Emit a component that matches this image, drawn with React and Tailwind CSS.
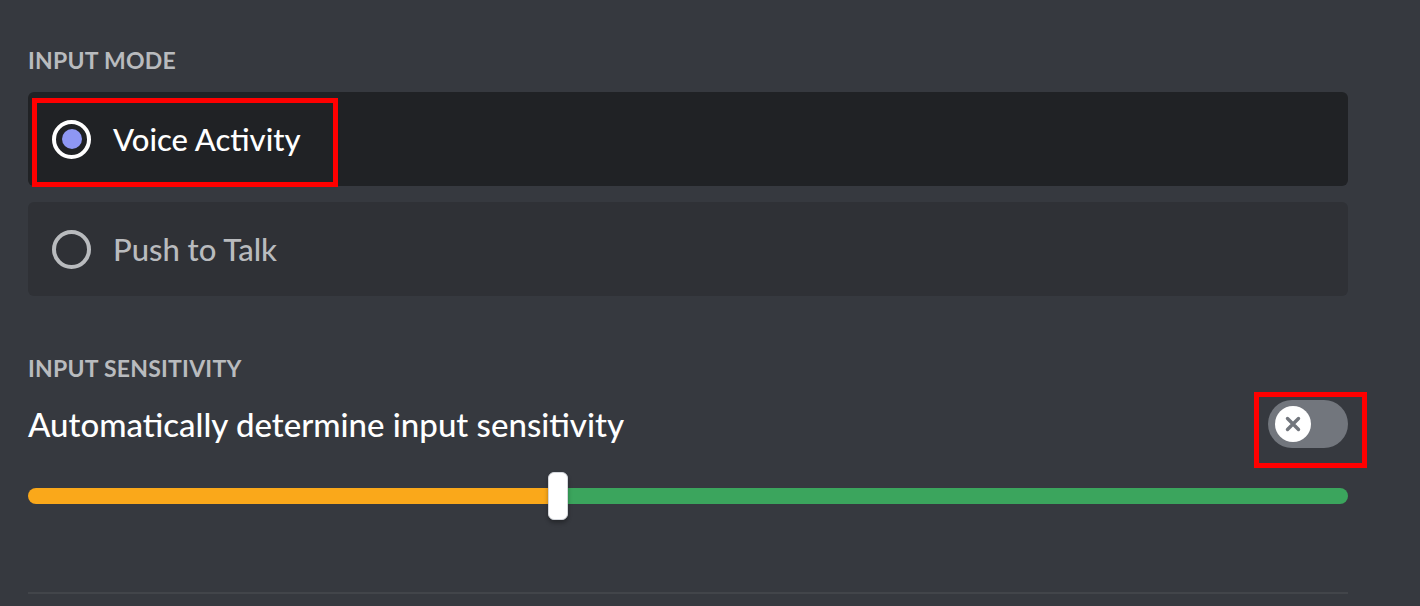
import React from "react";

const font = { fontFamily: "Lato, 'Noto Sans', sans-serif" };

function Radio({ checked }) {
  return (
    <span
      className={[
        "flex h-[39px] w-[39px] shrink-0 items-center justify-center rounded-full border-[4px]",
        checked ? "border-white" : "border-[#b9bbbe]",
      ].join(" ")}
    >
      {checked && <span className="block h-[20px] w-[20px] rounded-full bg-[#8e97f4]" />}
    </span>
  );
}

function ModeRow({ label, checked, marked }) {
  return (
    <div
      className={[
        "relative flex h-[94px] items-center gap-[22px] rounded-[6px] pl-[24px]",
        checked ? "bg-[#202225]" : "bg-[#2f3136]",
      ].join(" ")}
    >
      <Radio checked={checked} />
      <span
        className={[
          "text-[31px] font-medium leading-none",
          checked ? "text-white" : "text-[#b9bbbe]",
        ].join(" ")}
      >
        {label}
      </span>
      {marked && (
        <div className="pointer-events-none absolute left-[4px] top-[6px] h-[89px] w-[306px] border-[5px] border-[#ff0000]" />
      )}
    </div>
  );
}

export default function App() {
  return (
    <div className="min-h-[606px] bg-[#36393f] pl-[28px] pr-[72px] pt-[40px]" style={font}>
      <div className="flex h-[40px] items-center text-[23px] font-bold uppercase tracking-[0.01em] text-[#b9bbbe]">
        Input Mode
      </div>

      <div className="mt-[12px] flex flex-col gap-[16px]">
        <ModeRow label="Voice Activity" checked marked />
        <ModeRow label="Push to Talk" />
      </div>

      <div className="mt-[52px] flex h-[40px] items-center text-[23px] font-bold uppercase tracking-[0.01em] text-[#b9bbbe]">
        Input Sensitivity
      </div>

      <div className="mt-[12px] flex h-[48px] items-center justify-between">
        <span className="text-[33px] font-medium leading-none text-white">
          Automatically determine input sensitivity
        </span>
        <div className="relative h-[48px] w-[80px] rounded-full bg-[#72767d]">
          <div className="absolute left-[7px] top-[6px] flex h-[36px] w-[36px] items-center justify-center rounded-full bg-white">
            <svg width="18" height="18" viewBox="0 0 18 18">
              <path d="M3.5 3.5 L14.5 14.5 M14.5 3.5 L3.5 14.5" stroke="#72767d" strokeWidth="3.4" strokeLinecap="round" />
            </svg>
          </div>
          <div className="pointer-events-none absolute left-[-14px] top-[-8px] h-[76px] w-[113px] border-[5px] border-[#ff0000]" />
        </div>
      </div>

      <div className="relative mt-[24px] flex h-[48px] items-center">
        <div className="flex h-[16px] w-full overflow-hidden rounded-full">
          <div className="h-full w-[530px] bg-[#faa81a]" />
          <div className="h-full flex-1 bg-[#3ba55d]" />
        </div>
        <div className="absolute left-[520px] top-0 h-[48px] w-[20px] rounded-[6px] border border-[#d4d7dc] bg-white shadow-[0_3px_4px_rgba(0,0,0,0.3)]" />
      </div>

      <div className="mt-[72px] h-[2px] bg-[#42454a]" />
    </div>
  );
}
